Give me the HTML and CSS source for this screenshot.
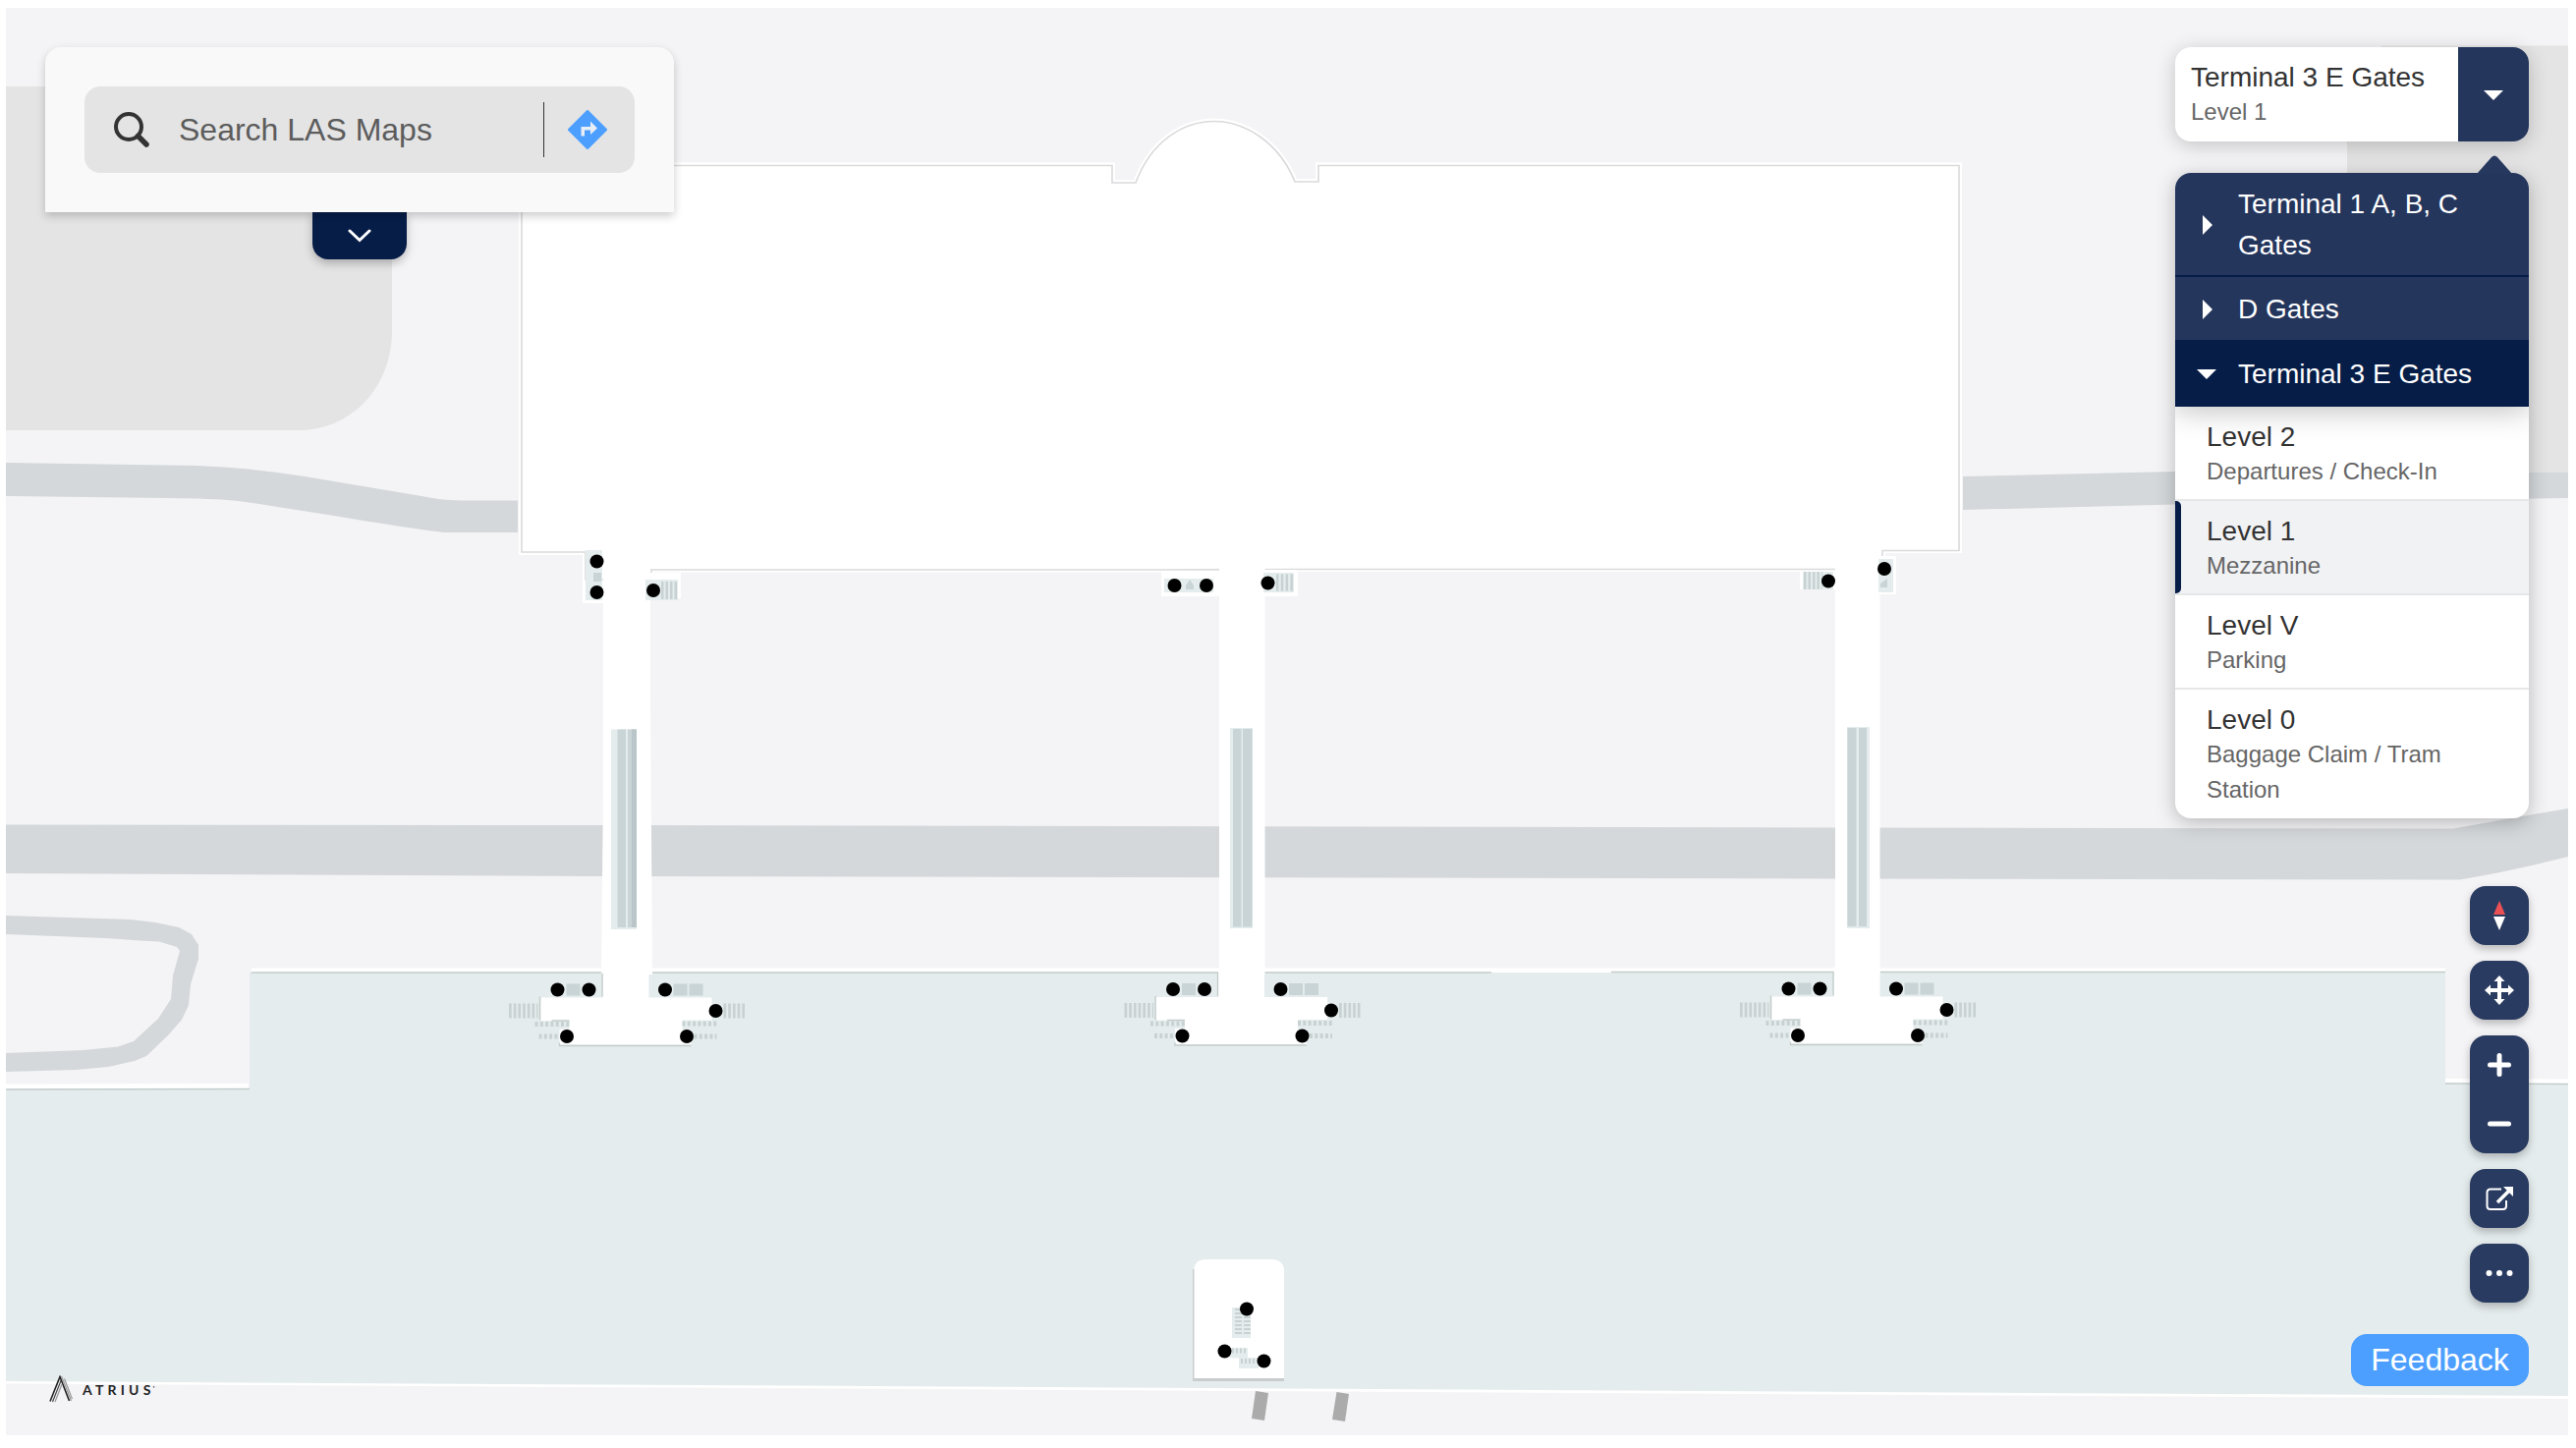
FILE: index.html
```html
<!DOCTYPE html>
<html lang="en">
<head>
    <meta charset="utf-8">
    <title>LAS Maps</title>
    <link rel="stylesheet" href="styles.css">
</head>
<body>
    <div class="map">
        <svg class="map-canvas" viewBox="6 8 2608 1453" preserveAspectRatio="none">
            <defs>
                <!-- curbside pod at the end of each pedestrian bridge -->
                <g id="pod">
                    <path class="floor" d="M1240 985V1015H1177V1038.500H1206V1047H1196V1063H1330V1048H1321V1038H1351V1015H1287V985Z"/>
                    <path class="edge" d="M1239.500 990V1014M1176 1014V1038M1188 1038.500H1206M1196 1061V1064H1330"/>
                    <path class="stairs" d="M1203 1001h14v12h-14zM1312 1001h14v12h-14zM1328 1001h14v12h-14z"/>
                    <path class="steps" stroke-width="15" stroke-dasharray="2.700 2" d="M1144.500 1028.500H1174M1363 1028.500H1385"/>
                    <path class="steps" stroke-width="5" stroke-dasharray="3 2.300" d="M1171 1042H1206M1321 1041.500H1357M1175 1054.500H1195M1333 1054.500H1356"/>
                    <circle cx="1194" cy="1007" r="7"/>
                    <circle cx="1226" cy="1007" r="7"/>
                    <circle cx="1303.500" cy="1007" r="7"/>
                    <circle cx="1355" cy="1028.500" r="7"/>
                    <circle cx="1203.500" cy="1054.500" r="7"/>
                    <circle cx="1325.500" cy="1054.500" r="7"/>
                </g>
            </defs>

            <!-- parking blocks -->
            <path class="block" d="M6 88H399V336C399 396 356 438 304 438H6Z"/>
            <path class="block" d="M2425 46.500H2614V481H2470C2420 481 2389 440 2389 390V70Z"/>

            <!-- roads -->
            <path class="road" d="M6 471L200 474Q255 476 310 485L435 506Q450 509.500 480 509.500H527V542H455Q440 541.500 340 525L250 511Q225 507.500 170 507L6 505Z"/>
            <path class="road" d="M1998 485L2214 480L2614 481V507L2214 513.500L1998 519Z"/>
            <path class="road" d="M6 839.500L614 840L1870 842.500L2497 843.500Q2560 832 2614 823V872Q2560 886 2504 895.500L1870 894.500L614 892L6 889Z"/>
            <path class="road" d="M6 932L133 936L158 939L182 944L195 951L202 962V976L194 1002L192 1023L185 1038L171 1054L149 1075L137 1080L110 1086L77 1089L6 1091V1072L85 1069L120 1065.500L136 1060L161 1037L174 1017L176 993L183 968L180 964L162 958.500L143 957.500L107 955L6 951Z"/>

            <!-- apron -->
            <path class="halo" d="M6 1106L253 1105.500M256 988H2489M2489 1100.500L2614 1101M6 1406L2614 1421.500"/>
            <path class="apron" d="M6 1109L254 1108V990H2489V1102.500L2614 1103.500V1421L6 1406Z"/>
            <path class="edge" d="M6 1109L254 1108.500M256 990H1518M1640 989.500H2489M2489 1103L2614 1103.500"/>

            <!-- terminal -->
            <path class="outline-halo" d="M531 562V168.500H1132V186H1156C1172 143 1205 123.500 1236 123.500S1302 145 1318 185H1342V168.500H1994V560H1916V579H1318V604H1286H1241H1185V579.500H663V604H614V611H596V562Z"/>
            <path class="outline" d="M531 562V168.500H1132V186H1156C1172 143 1205 123.500 1236 123.500S1302 145 1318 185H1342V168.500H1994V560.500H1916V579.500H1318L1185 580H663V590H596V562Z"/>

            <!-- bridges -->
            <path class="floor" d="M614 560H662V700L664 992H612L614 800Z"/>
            <path class="floor" d="M1241 570H1287.500V992H1241Z"/>
            <path class="floor" d="M1868 560H1913.500V992H1868Z"/>

            <!-- lobby equipment -->
            <path class="floor" d="M657 583H693V609H657ZM1183 586H1240V604H1183ZM1285 580H1320V604H1285ZM1832 582H1870V600H1832ZM1911 566H1930V605H1911Z"/>
            <path class="base" d="M596 560H613V611H596ZM657 590H690V611H657ZM1185 589H1235V603H1185ZM1286 583H1317V603H1286ZM1835 582H1866V600H1835ZM1912 569H1927V603H1912Z"/>
            <path class="stairs" d="M604 583h8v9h-8zM1207 596L1211 590L1215 596V600H1207ZM1914 594L1921 589V598H1914Z"/>
            <path class="steps" stroke-width="18" stroke-dasharray="2.500 2" d="M673 601H690M1836 591H1855"/>
            <path class="steps" stroke-width="17" stroke-dasharray="2.500 2.300" d="M1299 593H1317"/>

            <!-- moving walkways -->
            <path class="base" d="M622 742.500H648V946H622ZM1252 741H1275V945H1252ZM1880 740H1903V945H1880Z"/>
            <path class="stairs" d="M628.500 742.500H637V944H628.500ZM639 742.500H648V944H639ZM1255 742H1263.500V943.500H1255ZM1265 742H1274.500V943.500H1265ZM1880.500 741H1889.500V943H1880.500ZM1892 741H1900V943H1892Z"/>
            <path class="walkway-shade" d="M643 742.500H648V944H643Z"/>

            <use href="#pod" x="-626.500" y=".5"/>
            <use href="#pod"/>
            <use href="#pod" x="626.500" y="-.5"/>

            <circle cx="607.500" cy="571.500" r="7"/>
            <circle cx="607.500" cy="603" r="7"/>
            <circle cx="665" cy="601" r="7"/>
            <circle cx="1195.500" cy="596" r="7"/>
            <circle cx="1228" cy="596" r="7"/>
            <circle cx="1290.500" cy="593.500" r="7"/>
            <circle cx="1861" cy="591.500" r="7"/>
            <circle cx="1918" cy="579" r="7"/>

            <!-- kiosk south of the apron -->
            <path class="kiosk-shade" d="M1214 1292H1300V1398H1307V1406H1214Z"/>
            <path class="floor" d="M1215.500 1403V1292Q1216 1282 1227 1282H1296Q1306 1283 1307 1292V1403Z"/>
            <path class="base" d="M1254 1331H1273V1362H1254ZM1252 1372H1270V1382.500H1252ZM1261 1382H1281V1393H1261Z"/>
            <path class="steps" stroke-width="7" stroke-dasharray="2 2" d="M1260.500 1332V1360M1269.500 1340V1360"/>
            <path class="steps" stroke-width="5" stroke-dasharray="2 2" d="M1254 1375H1270M1263 1385.500H1278"/>
            <circle cx="1269" cy="1332.500" r="7"/>
            <circle cx="1246.500" cy="1375.500" r="7"/>
            <circle cx="1286.500" cy="1385.500" r="7"/>
            <path class="crosswalk" d="M1278 1416L1291 1418L1287 1446L1274 1444ZM1360.500 1417L1373 1419L1369 1447L1356 1445Z"/>
        </svg>
    </div>

    <div class="search-wrapper">
        <div class="search-panel">
            <div class="search-box">
                <svg class="search-icon" viewBox="0 0 36 36">
                    <circle cx="15" cy="15" r="13" fill="none" stroke="#333" stroke-width="4"/>
                    <path d="M24.500 24.500L33 33" stroke="#333" stroke-width="5.500" stroke-linecap="round"/>
                </svg>
                <span class="search-text">Search LAS Maps</span>
                <span class="search-divider"></span>
                <svg class="directions-icon" viewBox="0 0 40 40">
                    <path d="M20 1.500L38.500 20L20 38.500L1.500 20Z" fill="#4d9fff" stroke="#4d9fff" stroke-width="3" stroke-linejoin="round"/>
                    <path d="M13.500 26.500V17H23V11.500L30 18.500L23 25V20.500H17V26.500Z" fill="#e8eef5"/>
                </svg>
            </div>
        </div>
        <button class="expand-button">
            <svg width="24" height="14" viewBox="0 0 24 14"><path d="M2 2L12 11.500L22 2" fill="none" stroke="#fff" stroke-width="3" stroke-linecap="round"/></svg>
        </button>
    </div>

    <div class="level-selector">
        <div class="level-current">
            <div class="current-label">
                <div class="current-building">Terminal 3 E Gates</div>
                <div class="current-level">Level 1</div>
            </div>
            <button class="current-toggle"><span class="caret-down"></span></button>
        </div>

        <div class="level-menu">
            <svg class="menu-pointer" viewBox="0 0 36 19"><path d="M0 19L15 2Q18-1 21 2L36 19Z" fill="#27385f"/></svg>
            <div class="building building-first"><span class="arrow"><span class="caret-right"></span></span>Terminal 1 A, B, C Gates</div>
            <div class="building"><span class="arrow"><span class="caret-right"></span></span>D Gates</div>
            <div class="building building-open"><span class="arrow"><span class="caret-down"></span></span>Terminal 3 E Gates</div>
            <div class="level-list">
                <div class="level">
                    <div class="level-name">Level 2</div>
                    <div class="level-desc">Departures / Check-In</div>
                </div>
                <div class="level selected">
                    <div class="level-name">Level 1</div>
                    <div class="level-desc">Mezzanine</div>
                </div>
                <div class="level">
                    <div class="level-name">Level V</div>
                    <div class="level-desc">Parking</div>
                </div>
                <div class="level">
                    <div class="level-name">Level 0</div>
                    <div class="level-desc">Baggage Claim / Tram Station</div>
                </div>
            </div>
        </div>
    </div>

    <div class="map-controls">
        <button class="control-button">
            <svg width="12" height="32" viewBox="0 0 12 32"><path d="M6 1L12 15H0Z" fill="#eb5055"/><path d="M0 17H12L6 31Z" fill="#fff"/></svg>
        </button>
        <button class="control-button">
            <svg width="30" height="30" viewBox="0 0 30 30"><path fill="#fff" d="M15 0L20.500 6H17V13H24V9.500L30 15L24 20.500V17H17V24H20.500L15 30L9.500 24H13V17H6V20.500L0 15L6 9.500V13H13V6H9.500Z"/></svg>
        </button>
        <div class="zoom-buttons">
            <button class="control-button">
                <svg width="24" height="24" viewBox="0 0 24 24"><path d="M12 2.500V21.500M2.500 12H21.500" stroke="#fff" stroke-width="5" stroke-linecap="round"/></svg>
            </button>
            <button class="control-button">
                <svg width="24" height="24" viewBox="0 0 24 24"><path d="M2.500 12H21.500" stroke="#fff" stroke-width="5" stroke-linecap="round"/></svg>
            </button>
        </div>
        <button class="control-button">
            <svg width="28" height="26" viewBox="0 0 28 26">
                <path d="M16 3.500H5Q1.500 3.500 1.500 7V20.500Q1.500 24 5 24H17.500Q21 24 21 20.500V15" fill="none" stroke="#fff" stroke-width="2"/>
                <path d="M12 17L24 5" stroke="#fff" stroke-width="3.500"/>
                <path d="M18 1H28V11Z" fill="#fff"/>
            </svg>
        </button>
        <button class="control-button">
            <svg width="28" height="8" viewBox="0 0 28 8"><circle cx="3.500" cy="4" r="3" fill="#fff"/><circle cx="14" cy="4" r="3" fill="#fff"/><circle cx="24.500" cy="4" r="3" fill="#fff"/></svg>
        </button>
        <button class="feedback-button">Feedback</button>
    </div>

    <div class="logo">
        <svg width="24" height="28" viewBox="0 0 24 28" fill="none">
            <path d="M1 26.500L11 1.500L20.500 26" stroke="#222" stroke-width="1.600"/>
            <path d="M3.500 27L12 5.500" stroke="#444" stroke-width="1.200"/>
            <path d="M6 27L13 9M12.500 1L22.500 26M15.500 3.500L23.500 24" stroke="#999" stroke-width="1.200"/>
        </svg>
        <span class="logo-text">ATRIUS</span><span class="logo-mark">&#8217;</span>
    </div>
</body>
</html>
```

FILE: styles.css
```css
* {
    box-sizing: border-box;
}

body {
    margin: 0;
    width: 2622px;
    height: 1474px;
    padding: 8px 8px 13px 6px;
    position: relative;
    overflow: hidden;
    background: #fff;
    font-family: "Liberation Sans", Arial, sans-serif;
    color: #333;
}

button {
    display: flex;
    align-items: center;
    justify-content: center;
    padding: 0;
    border: none;
    font-family: inherit;
    cursor: pointer;
}

/* map */
.map {
    width: 2608px;
    height: 1453px;
    background: #f4f4f6;
}

.map-canvas {
    display: block;
    width: 100%;
    height: 100%;
}

.block {
    fill: #e4e4e4;
}

.road {
    fill: #d4d8da;
}

.apron,
.base {
    fill: #e5eced;
}

.floor {
    fill: #fff;
}

.stairs {
    fill: #c8d4d5;
}

.walkway-shade {
    fill: #b9c5c8;
}

.kiosk-shade {
    fill: #c9cdce;
}

.crosswalk {
    fill: #ababab;
}

.halo {
    fill: none;
    stroke: #fff;
    stroke-width: 5;
}

.edge {
    fill: none;
    stroke: #c3cbcb;
    stroke-width: 1.3;
}

.steps {
    fill: none;
    stroke: #c8d2d2;
}

.outline-halo {
    fill: #fff;
    stroke: #fff;
    stroke-width: 6;
}

.outline {
    fill: #fff;
    stroke: #dadada;
    stroke-width: 1.6;
}

/* search */
.search-wrapper {
    position: absolute;
    top: 48px;
    left: 46px;
    width: 640px;
    display: flex;
    flex-direction: column;
    align-items: center;
}

.search-panel {
    position: relative;
    z-index: 1;
    width: 100%;
    padding: 40px;
    background: #f9f9f9;
    border-radius: 16px 16px 0 0;
    box-shadow: 0 4px 10px rgba(0, 0, 0, 0.2);
}

.search-box {
    display: flex;
    align-items: center;
    height: 88px;
    padding: 0 28px 0 30px;
    background: #e4e4e4;
    border-radius: 16px;
}

.search-icon {
    width: 36px;
    height: 36px;
    margin-right: 30px;
}

.search-text {
    flex: 1;
    font-size: 32px;
    color: #5c5c5c;
}

.search-divider {
    width: 1px;
    height: 56px;
    margin-right: 24px;
    background: #333;
}

.directions-icon {
    width: 40px;
    height: 40px;
}

.expand-button {
    width: 96px;
    height: 48px;
    background: #061d48;
    border-radius: 0 0 16px 16px;
    box-shadow: 0 4px 10px rgba(0, 0, 0, 0.25);
}

/* level selector */
.level-selector {
    position: absolute;
    top: 48px;
    left: 2214px;
    width: 360px;
    display: flex;
    flex-direction: column;
    gap: 32px;
    font-size: 28px;
}

.level-current {
    display: flex;
    height: 96px;
    background: #fff;
    border-radius: 16px;
    overflow: hidden;
    box-shadow: 0 4px 20px rgba(0, 0, 0, 0.2);
}

.current-label {
    flex: 1;
    padding: 14px 16px 0;
}

.current-building {
    line-height: 34px;
}

.current-level {
    font-size: 24px;
    line-height: 36px;
    color: #666;
}

.current-toggle {
    width: 72px;
    padding-top: 2px;
    background: #25365d;
}

.caret-down {
    border-left: 10px solid transparent;
    border-right: 10px solid transparent;
    border-top: 10px solid #fff;
}

.caret-right {
    border-top: 10px solid transparent;
    border-bottom: 10px solid transparent;
    border-left: 10px solid #fff;
}

.level-menu {
    position: relative;
    border-radius: 16px;
    background: #fff;
    box-shadow: 0 4px 20px rgba(0, 0, 0, 0.25);
}

.menu-pointer {
    position: absolute;
    top: -18px;
    left: 307px;
    width: 36px;
    height: 19px;
}

.building {
    display: flex;
    align-items: center;
    height: 64px;
    padding: 2px 32px 0 0;
    line-height: 42px;
    color: #fff;
    background: #25365d;
}

.building-first {
    height: 106px;
    border-radius: 16px 16px 0 0;
    border-bottom: 2px solid #061d48;
}

.building-open {
    position: relative;
    height: 68px;
    background: #061d48;
    box-shadow: 0 4px 30px rgba(0, 0, 0, 0.25);
    clip-path: inset(0 0 -40px 0);
}

.arrow {
    display: flex;
    flex-shrink: 0;
    justify-content: center;
    width: 64px;
    padding-left: 2px;
}

.building-open .arrow {
    padding-left: 0;
}

.level {
    padding: 13px 32px 10px;
    border-bottom: 2px solid #e6e7e8;
}

.level:last-child {
    padding-bottom: 9px;
    border-bottom-color: transparent;
}

.level-name {
    line-height: 35px;
}

.level-desc {
    font-size: 24px;
    line-height: 36px;
    color: #666;
}

.selected {
    position: relative;
    background: #f1f2f4;
}

.selected::before {
    content: "";
    position: absolute;
    top: 0;
    left: 0;
    width: 6px;
    height: 100%;
    background: #061d48;
    border-radius: 0 5px 5px 0;
}

/* map controls */
.map-controls {
    position: absolute;
    top: 902px;
    right: 48px;
    display: flex;
    flex-direction: column;
    align-items: flex-end;
    gap: 16px;
}

.control-button {
    width: 60px;
    height: 60px;
    background: #2a3b61;
    border-radius: 16px;
    box-shadow: 0 4px 8px rgba(0, 0, 0, 0.25);
}

.zoom-buttons {
    background: #2a3b61;
    border-radius: 16px;
    box-shadow: 0 4px 8px rgba(0, 0, 0, 0.25);
}

.zoom-buttons .control-button {
    background: none;
    box-shadow: none;
}

.feedback-button {
    width: 181px;
    height: 53px;
    margin-top: 16px;
    background: #4d9fff;
    border-radius: 16px;
    color: #fff;
    font-size: 32px;
}

/* logo */
.logo {
    position: absolute;
    left: 50px;
    top: 1400px;
    display: flex;
    align-items: center;
    height: 28px;
}

.logo-text {
    margin-left: 10px;
    font-family: Lato, sans-serif;
    font-size: 14px;
    font-weight: bold;
    letter-spacing: 4.2px;
    color: #222;
}

.logo-mark {
    margin-left: -2px;
    font-size: 9px;
    line-height: 14px;
    color: #222;
}
```
